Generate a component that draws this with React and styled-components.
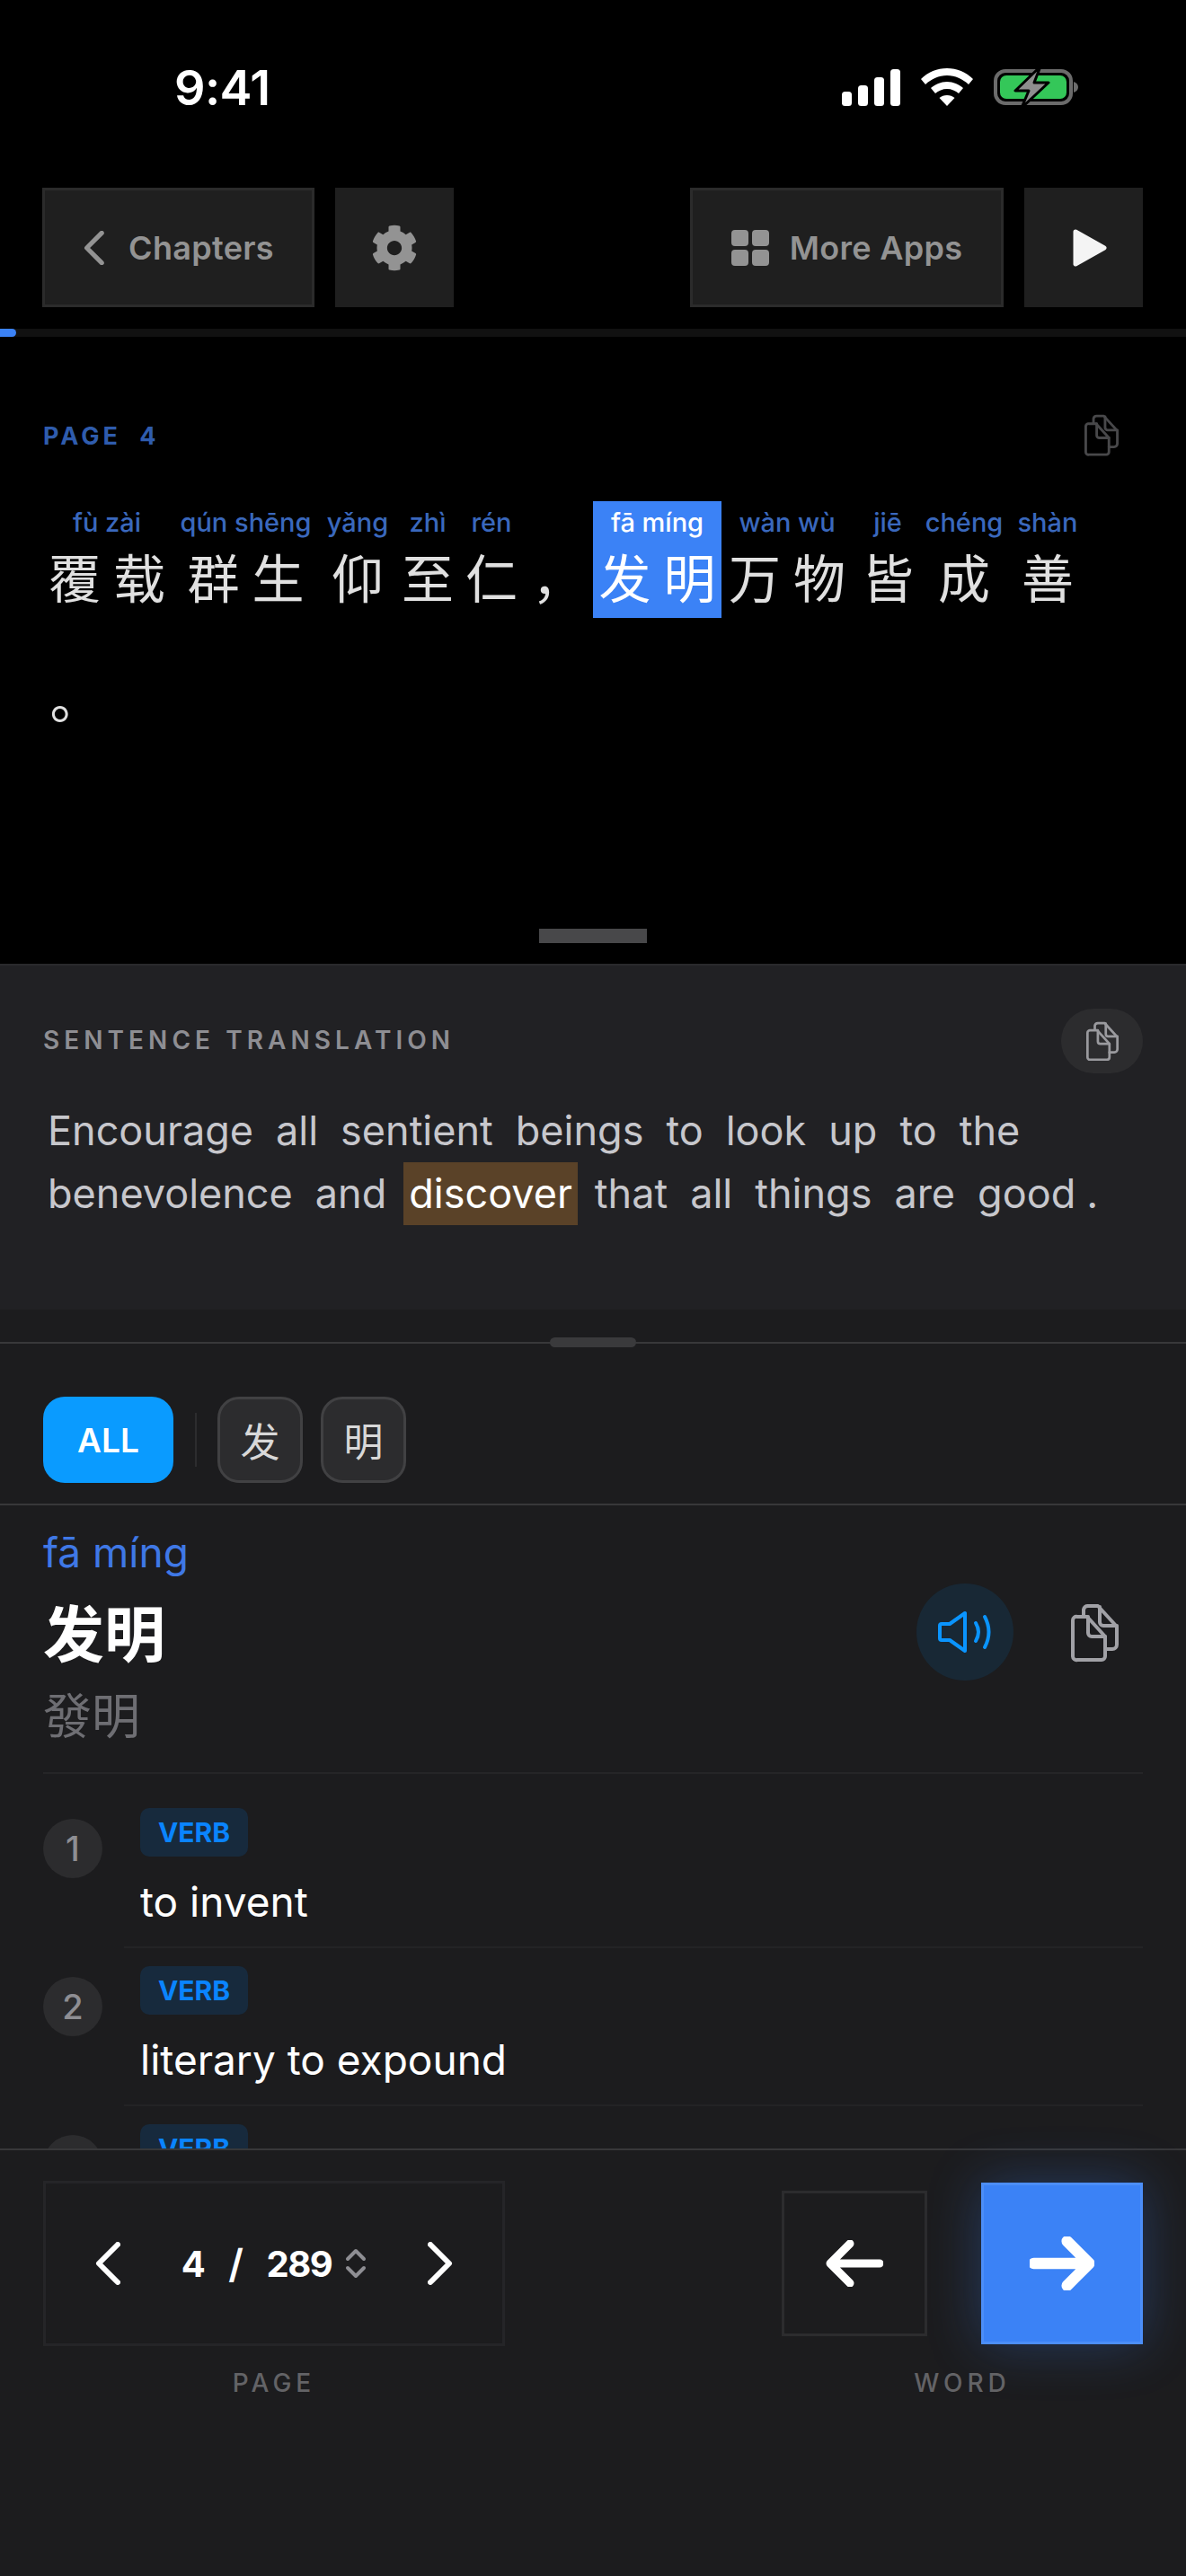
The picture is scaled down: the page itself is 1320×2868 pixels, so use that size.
import React from 'react'
import styled, { createGlobalStyle } from 'styled-components'
import { FaCog } from 'react-icons/fa'

const Global = createGlobalStyle`
  html, body { margin: 0; padding: 0; background: #000; }
  * { box-sizing: border-box; }
`

const CJK = `Inter, 'Noto Sans CJK SC', sans-serif`

const Phone = styled.div`
  width: 1320px;
  height: 2868px;
  display: flex;
  flex-direction: column;
  overflow: hidden;
  background: #1c1c1e;
  font-family: ${CJK};
  color: #fff;
`

/* top reader */
const Reader = styled.section`
  height: 1073px;
  flex: none;
  background: #000;
  display: flex;
  flex-direction: column;
`
const Status = styled.div`
  height: 194px;
  display: flex;
  align-items: center;
  justify-content: space-between;
  padding: 0 120px 0 194px;
`
const Clock = styled.div`
  font-size: 54px;
  font-weight: 600;
  letter-spacing: -0.6px;
`
const StatusIcons = styled.div`
  display: flex;
  align-items: center;
  gap: 23px;
`
const Toolbar = styled.div`
  margin-top: 15px;
  padding: 0 48px 0 47px;
  display: flex;
  gap: 23px;
`
const ToolButton = styled.div`
  height: 133px;
  width: ${p => p.$w}px;
  margin-left: ${p => (p.$push ? 'auto' : '0')};
  display: flex;
  align-items: center;
  justify-content: center;
  gap: ${p => p.$gap || 0}px;
  background: #1f1f1f;
  border: 3px solid ${p => (p.$plain ? '#1f1f1f' : '#2b2b2b')};
  color: #939393;
  font-size: 36px;
  font-weight: 600;
  letter-spacing: 0.3px;
`
const PlayNudge = styled.span`
  display: flex;
  margin-left: 14px;
`
const Progress = styled.div`
  margin-top: 24px;
  height: 9px;
  background: #111;
`
const ProgressFill = styled.div`
  height: 100%;
  background: #3b82f6;
  border-radius: 0 5px 5px 0;
`
const PageHead = styled.div`
  margin-top: 88px;
  height: 44px;
  padding: 0 75px 0 48px;
  display: flex;
  align-items: center;
  justify-content: space-between;
`
const PageLabel = styled.div`
  font-size: 27px;
  font-weight: 700;
  letter-spacing: 4px;
  word-spacing: 10px;
  color: #2f5cad;
`
const Sentence = styled.div`
  margin-top: 51px;
  padding: 0 47px;
  display: flex;
  flex-wrap: wrap;
  row-gap: 4px;
`
const Word = styled.div`
  width: ${p => p.$w}px;
  height: 130px;
  display: flex;
  flex-direction: column;
  align-items: center;
  background: ${p => (p.$on ? '#3b82f6' : 'transparent')};
`
const Pinyin = styled.div`
  height: 48px;
  line-height: 48px;
  font-size: 29px;
  font-weight: 500;
  white-space: nowrap;
  color: ${p => (p.$on ? '#fff' : '#3a68bd')};
`
const Chars = styled.div`
  height: 82px;
  display: flex;
  justify-content: center;
`
const Char = styled.span`
  width: 72px;
  text-align: center;
  font-size: 58px;
  line-height: 79px;
  color: ${p => (p.$on ? '#fff' : '#e0e0e0')};
`
const Grip = styled.div`
  width: 120px;
  height: 16px;
  margin: auto auto 23px;
  background: #48484a;
`

/* translation */
const Translation = styled.section`
  height: 385px;
  flex: none;
  padding: 48px 48px 0;
  background: #212124;
  border-top: 2px solid #2a2a2c;
`
const TransHead = styled.div`
  display: flex;
  align-items: center;
  justify-content: space-between;
`
const Eyebrow = styled.div`
  font-size: 28px;
  font-weight: 600;
  letter-spacing: 5.05px;
  color: #8e8e93;
  margin-top: -2px;
`
const CopyPill = styled.div`
  width: 91px;
  height: 72px;
  border-radius: 36px;
  background: #2c2c2e;
  display: flex;
  align-items: center;
  justify-content: center;
`
const Paragraph = styled.p`
  margin: 29px 0 0 -1px;
  font-size: 45px;
  line-height: 70px;
  color: #c7c7cc;
  white-space: nowrap;
`
const TWord = styled.span`
  display: inline-block;
  padding: 0 6px;
  margin-right: ${p => p.$gap}px;
  background: ${p => (p.$on ? '#5a4228' : 'transparent')};
  color: ${p => (p.$on ? '#fff' : 'inherit')};
`

/* dictionary */
const Sheet = styled.section`
  flex: 1;
  min-height: 0;
  display: flex;
  flex-direction: column;
`
const SheetEdge = styled.div`
  position: relative;
  margin-top: 36px;
  height: 2px;
  flex: none;
  background: #38383a;
`
const SheetPill = styled.div`
  position: absolute;
  left: 612px;
  top: -5px;
  width: 96px;
  height: 11px;
  border-radius: 6px;
  background: #3a3a3c;
`
const Filters = styled.div`
  height: 180px;
  flex: none;
  padding: 59px 48px 0;
  display: flex;
  gap: 20px;
  border-bottom: 2px solid #38383a;
`
const AllChip = styled.div`
  width: 145px;
  height: 96px;
  border-radius: 24px;
  background: #0a9bff;
  display: flex;
  align-items: center;
  justify-content: center;
  font-size: 37px;
  font-weight: 600;
  margin-right: 4px;
`
const FilterSep = styled.div`
  width: 2px;
  height: 60px;
  margin: 18px 3px 0 0;
  background: #2c2c2e;
`
const HanChip = styled.div`
  width: 95px;
  height: 96px;
  border-radius: 24px;
  background: #2c2c2e;
  border: 3px solid #414143;
  display: flex;
  align-items: center;
  justify-content: center;
  font-size: 44px;
  color: #d8d8d8;
`
const Entry = styled.div`
  height: 299px;
  flex: none;
  margin: 0 48px;
  display: flex;
  justify-content: space-between;
  border-bottom: 2px solid #252527;
`
const EntryText = styled.div`
  padding-top: 24px;
  display: flex;
  flex-direction: column;
`
const EntryPinyin = styled.div`
  height: 56px;
  line-height: 56px;
  font-size: 46px;
  color: #3f78e6;
`
const Hanzi = styled.div`
  margin-top: 22px;
  height: 84px;
  line-height: 84px;
  font-size: 68px;
  font-weight: 700;
`
const Traditional = styled.div`
  margin-top: 20px;
  height: 60px;
  line-height: 60px;
  font-size: 54px;
  color: #6e6e73;
`
const EntryActions = styled.div`
  padding-top: 87px;
  padding-right: 27px;
  display: flex;
  align-items: flex-start;
  gap: 64px;
`
const Speaker = styled.div`
  width: 108px;
  height: 108px;
  border-radius: 50%;
  background: #182835;
  display: flex;
  align-items: center;
  justify-content: center;
`
const CopyAlign = styled.div`
  padding-top: 22px;
`
const Senses = styled.div`
  flex: 1;
  min-height: 0;
  overflow: hidden;
  padding-top: 18px;
`
const Sense = styled.div`
  padding: 20px 48px;
  display: flex;
  gap: 42px;
`
const SenseNum = styled.div`
  width: 66px;
  height: 66px;
  flex: none;
  margin-top: 12px;
  border-radius: 50%;
  background: #2c2c2e;
  display: flex;
  align-items: center;
  justify-content: center;
  font-size: 38px;
  font-weight: 500;
  color: #8e8e93;
`
const Pos = styled.div`
  width: 120px;
  height: 54px;
  border-radius: 10px;
  background: #172a3d;
  color: #0a84ff;
  display: flex;
  align-items: center;
  justify-content: center;
  font-size: 30px;
  font-weight: 700;
`
const Gloss = styled.div`
  margin-top: 20px;
  height: 60px;
  line-height: 60px;
  font-size: 46px;
`
const SenseRule = styled.div`
  height: 2px;
  margin: 0 48px 0 138px;
  background: #232325;
`

/* footer */
const Footer = styled.footer`
  height: 476px;
  flex: none;
  padding: 34px 48px 0;
  background: #1c1c1e;
  border-top: 2px solid #38383a;
  display: flex;
  justify-content: space-between;
`
const NavGroup = styled.div`
  display: flex;
  flex-direction: column;
  align-items: center;
`
const NavLabel = styled.div`
  margin-top: 21px;
  line-height: 40px;
  font-size: 28px;
  font-weight: 500;
  letter-spacing: 5px;
  color: #636366;
`
const PageBox = styled.div`
  width: 514px;
  height: 184px;
  padding: 0 55px;
  border: 3px solid #252528;
  display: flex;
  align-items: center;
  justify-content: space-between;
`
const Counter = styled.div`
  display: flex;
  align-items: center;
  gap: 27px;
  font-size: 40px;
  font-weight: 700;
  letter-spacing: -1.5px;
`
const Slash = styled.span`
  font-size: 44px;
  font-weight: 600;
`
const Stepper = styled.span`
  display: flex;
  margin-left: -12px;
`
const WordRow = styled.div`
  height: 184px;
  display: flex;
  align-items: center;
  gap: 60px;
`
const PrevWord = styled.div`
  width: 162px;
  height: 162px;
  border: 3px solid #2c2c2e;
  display: flex;
  align-items: center;
  justify-content: center;
`
const NextWord = styled.div`
  width: 180px;
  height: 180px;
  background: #3b82f6;
  border: 3px solid #4c8ef8;
  box-shadow: 0 0 60px rgba(59, 130, 246, 0.3);
  display: flex;
  align-items: center;
  justify-content: center;
`

const CopyIcon = ({ w = 38, color = '#48484a', sw = 4 }) => (
  <svg width={w} height={w * 66 / 53} viewBox="0 0 53 66" fill="none" stroke={color} strokeWidth={sw} strokeLinecap="round" strokeLinejoin="round">
    <path d="M7 15H18L38 37V59a4 4 0 0 1-4 4H7a4 4 0 0 1-5-4V19a4 4 0 0 1 5-4Z" />
    <path d="M19 15V33a4 4 0 0 0 4 4H38" />
    <path d="M14 14V7a5 5 0 0 1 5-4H30L51 26V46a5 5 0 0 1-5 5H38" />
    <path d="M32 4V21a4 4 0 0 0 4 4H51" />
  </svg>
)

const Chevron = ({ dir, w, h, color, sw }) => (
  <svg width={w} height={h} viewBox="0 0 28 48" fill="none" stroke={color} strokeWidth={sw} strokeLinecap="round" strokeLinejoin="round">
    <path d={dir === 'left' ? 'M25 3 4 24l21 21' : 'M3 3l21 21L3 45'} />
  </svg>
)

const Arrow = ({ dir, w, h, sw }) => (
  <svg width={w} height={h} viewBox="0 0 64 52" fill="none" stroke="#fff" strokeWidth={sw} strokeLinecap="round" strokeLinejoin="round">
    {dir === 'left'
      ? <path d="M60 26H6M27 4 5 26l22 22" />
      : <path d="M4 26h54M37 4l22 22-22 22" />}
  </svg>
)

const words = [
  { py: 'fù zài', zh: '覆载', w: 144 },
  { py: 'qún shēng', zh: '群生', w: 165 },
  { py: 'yǎng', zh: '仰', w: 84 },
  { py: 'zhì', zh: '至', w: 72 },
  { py: 'rén', zh: '仁', w: 70 },
  { py: '', zh: '，', w: 78 },
  { py: 'fā míng', zh: '发明', w: 143, on: true },
  { py: 'wàn wù', zh: '万物', w: 146 },
  { py: 'jiē', zh: '皆', w: 78 },
  { py: 'chéng', zh: '成', w: 92 },
  { py: 'shàn', zh: '善', w: 94 },
  { py: '', zh: '。', w: 75 },
]

const line1 = ['Encourage', 'all', 'sentient', 'beings', 'to', 'look', 'up', 'to', 'the']
const line2 = ['benevolence', 'and', 'discover', 'that', 'all', 'things', 'are', 'good', '.']

const senses = [
  { n: 1, text: 'to invent' },
  { n: 2, text: 'literary to expound' },
  { n: 3 },
]

export default function App() {
  return (
    <Phone>
      <Global />
      <Reader>
        <Status>
          <Clock>9:41</Clock>
          <StatusIcons>
            <svg width="65" height="41" viewBox="0 0 65 41" fill="#fff">
              <rect x="0" y="25" width="11" height="16" rx="3.5" />
              <rect x="18" y="18" width="11" height="23" rx="3.5" />
              <rect x="36" y="9" width="11" height="32" rx="3.5" />
              <rect x="54" y="0" width="11" height="41" rx="3.5" />
            </svg>
            <svg width="58" height="42" viewBox="0 0 58 42" fill="#fff">
              <path d="M29 0C18 0 8 4 0 12l5 6c6.500-6 15-10 24-10s17.500 4 24 10l5-6C50 4 40 0 29 0Z" />
              <path d="M29 15c-7 0-13 3-18 7l5 6c3.500-3 8-5 13-5s9.500 2 13 5l5-6c-5-4-11-7-18-7Z" />
              <path d="M29 30c-3.500 0-6 1-8.500 3L29 42l8.500-9c-2.500-2-5-3-8.500-3Z" />
            </svg>
            <svg width="94" height="46" viewBox="0 0 94 46">
              <rect x="2" y="5" width="84" height="36" rx="11" fill="none" stroke="#6b6b6b" strokeWidth="4" />
              <rect x="7" y="10" width="74" height="26" rx="7" fill="#34c759" />
              <path d="M89 17c3 1 5 3 5 6s-2 5-5 6Z" fill="#6b6b6b" />
              <path d="M52 0 24 27h15l-8 19 30-28H45Z" fill="#8e8e8e" stroke="#000" strokeWidth="3" strokeLinejoin="round" />
            </svg>
          </StatusIcons>
        </Status>
        <Toolbar>
          <ToolButton $w={303} $gap={26}>
            <Chevron dir="left" w={25} h={38} color="#939393" sw={6.5} />
            Chapters
          </ToolButton>
          <ToolButton $w={132} $plain>
            <FaCog size={52} color="#939393" />
          </ToolButton>
          <ToolButton $w={349} $gap={23} $push>
            <svg width="42" height="40" viewBox="0 0 42 40" fill="#939393">
              <rect x="0" y="0" width="19" height="18" rx="4" />
              <rect x="23" y="0" width="19" height="18" rx="4" />
              <rect x="0" y="22" width="19" height="18" rx="4" />
              <rect x="23" y="22" width="19" height="18" rx="4" />
            </svg>
            More Apps
          </ToolButton>
          <ToolButton $w={132} $plain>
            <PlayNudge>
              <svg width="38" height="42" viewBox="0 0 38 42" fill="#f4f4f4" stroke="#f4f4f4" strokeWidth="5" strokeLinejoin="round">
                <path d="M3 3 35 21 3 39Z" />
              </svg>
            </PlayNudge>
          </ToolButton>
        </Toolbar>
        <Progress>
          <ProgressFill style={{ width: 18 }} />
        </Progress>
        <PageHead>
          <PageLabel>PAGE 4</PageLabel>
          <CopyIcon />
        </PageHead>
        <Sentence>
          {words.map((word, i) => (
            <Word key={i} $w={word.w} $on={word.on}>
              <Pinyin $on={word.on}>{word.py}</Pinyin>
              <Chars>
                {[...word.zh].map((c, j) => <Char key={j} $on={word.on}>{c}</Char>)}
              </Chars>
            </Word>
          ))}
        </Sentence>
        <Grip />
      </Reader>

      <Translation>
        <TransHead>
          <Eyebrow>SENTENCE TRANSLATION</Eyebrow>
          <CopyPill><CopyIcon w={36} color="#9a9a9e" /></CopyPill>
        </TransHead>
        <Paragraph>
          {line1.map((w, i) => <TWord key={i} $gap={13}>{w}</TWord>)}
          <br />
          {line2.map((w, i) => (
            <TWord key={i} $gap={w === 'good' ? 0 : 13} $on={w === 'discover'}>{w}</TWord>
          ))}
        </Paragraph>
      </Translation>

      <Sheet>
        <SheetEdge><SheetPill /></SheetEdge>
        <Filters>
          <AllChip>ALL</AllChip>
          <FilterSep />
          <HanChip>发</HanChip>
          <HanChip>明</HanChip>
        </Filters>
        <Entry>
          <EntryText>
            <EntryPinyin>fā míng</EntryPinyin>
            <Hanzi>发明</Hanzi>
            <Traditional>發明</Traditional>
          </EntryText>
          <EntryActions>
            <Speaker>
              <svg width="68" height="54" viewBox="0 0 68 54" fill="none" stroke="#0a95ff" strokeWidth="4" strokeLinecap="round" strokeLinejoin="round">
                <path d="M8 18H17L34 6V48L17 36H8Q6 36 6 34V20Q6 18 8 18Z" />
                <path d="M46 17Q52 27 46 37" />
                <path d="M56 10Q65 27 56 44" />
              </svg>
            </Speaker>
            <CopyAlign><CopyIcon w={53} color="#a1a1a6" sw={4} /></CopyAlign>
          </EntryActions>
        </Entry>
        <Senses>
          {senses.map((s, i) => (
            <React.Fragment key={s.n}>
              {i > 0 && <SenseRule />}
              <Sense>
                <SenseNum>{s.text ? s.n : ''}</SenseNum>
                <div>
                  <Pos>VERB</Pos>
                  {s.text && <Gloss>{s.text}</Gloss>}
                </div>
              </Sense>
            </React.Fragment>
          ))}
        </Senses>
        <Footer>
          <NavGroup>
            <PageBox>
              <Chevron dir="left" w={28} h={48} color="#fff" sw={6} />
              <Counter>
                <span>4</span>
                <Slash>/</Slash>
                <span>289</span>
                <Stepper>
                  <svg width="24" height="34" viewBox="0 0 24 34" fill="none" stroke="#8e8e93" strokeWidth="4" strokeLinecap="round" strokeLinejoin="round">
                    <path d="M3 12 12 3l9 9M3 22l9 9 9-9" />
                  </svg>
                </Stepper>
              </Counter>
              <Chevron dir="right" w={28} h={48} color="#fff" sw={6} />
            </PageBox>
            <NavLabel>PAGE</NavLabel>
          </NavGroup>
          <NavGroup>
            <WordRow>
              <PrevWord><Arrow dir="left" w={64} h={52} sw={9} /></PrevWord>
              <NextWord><Arrow dir="right" w={72} h={60} sw={11} /></NextWord>
            </WordRow>
            <NavLabel>WORD</NavLabel>
          </NavGroup>
        </Footer>
      </Sheet>
    </Phone>
  )
}
